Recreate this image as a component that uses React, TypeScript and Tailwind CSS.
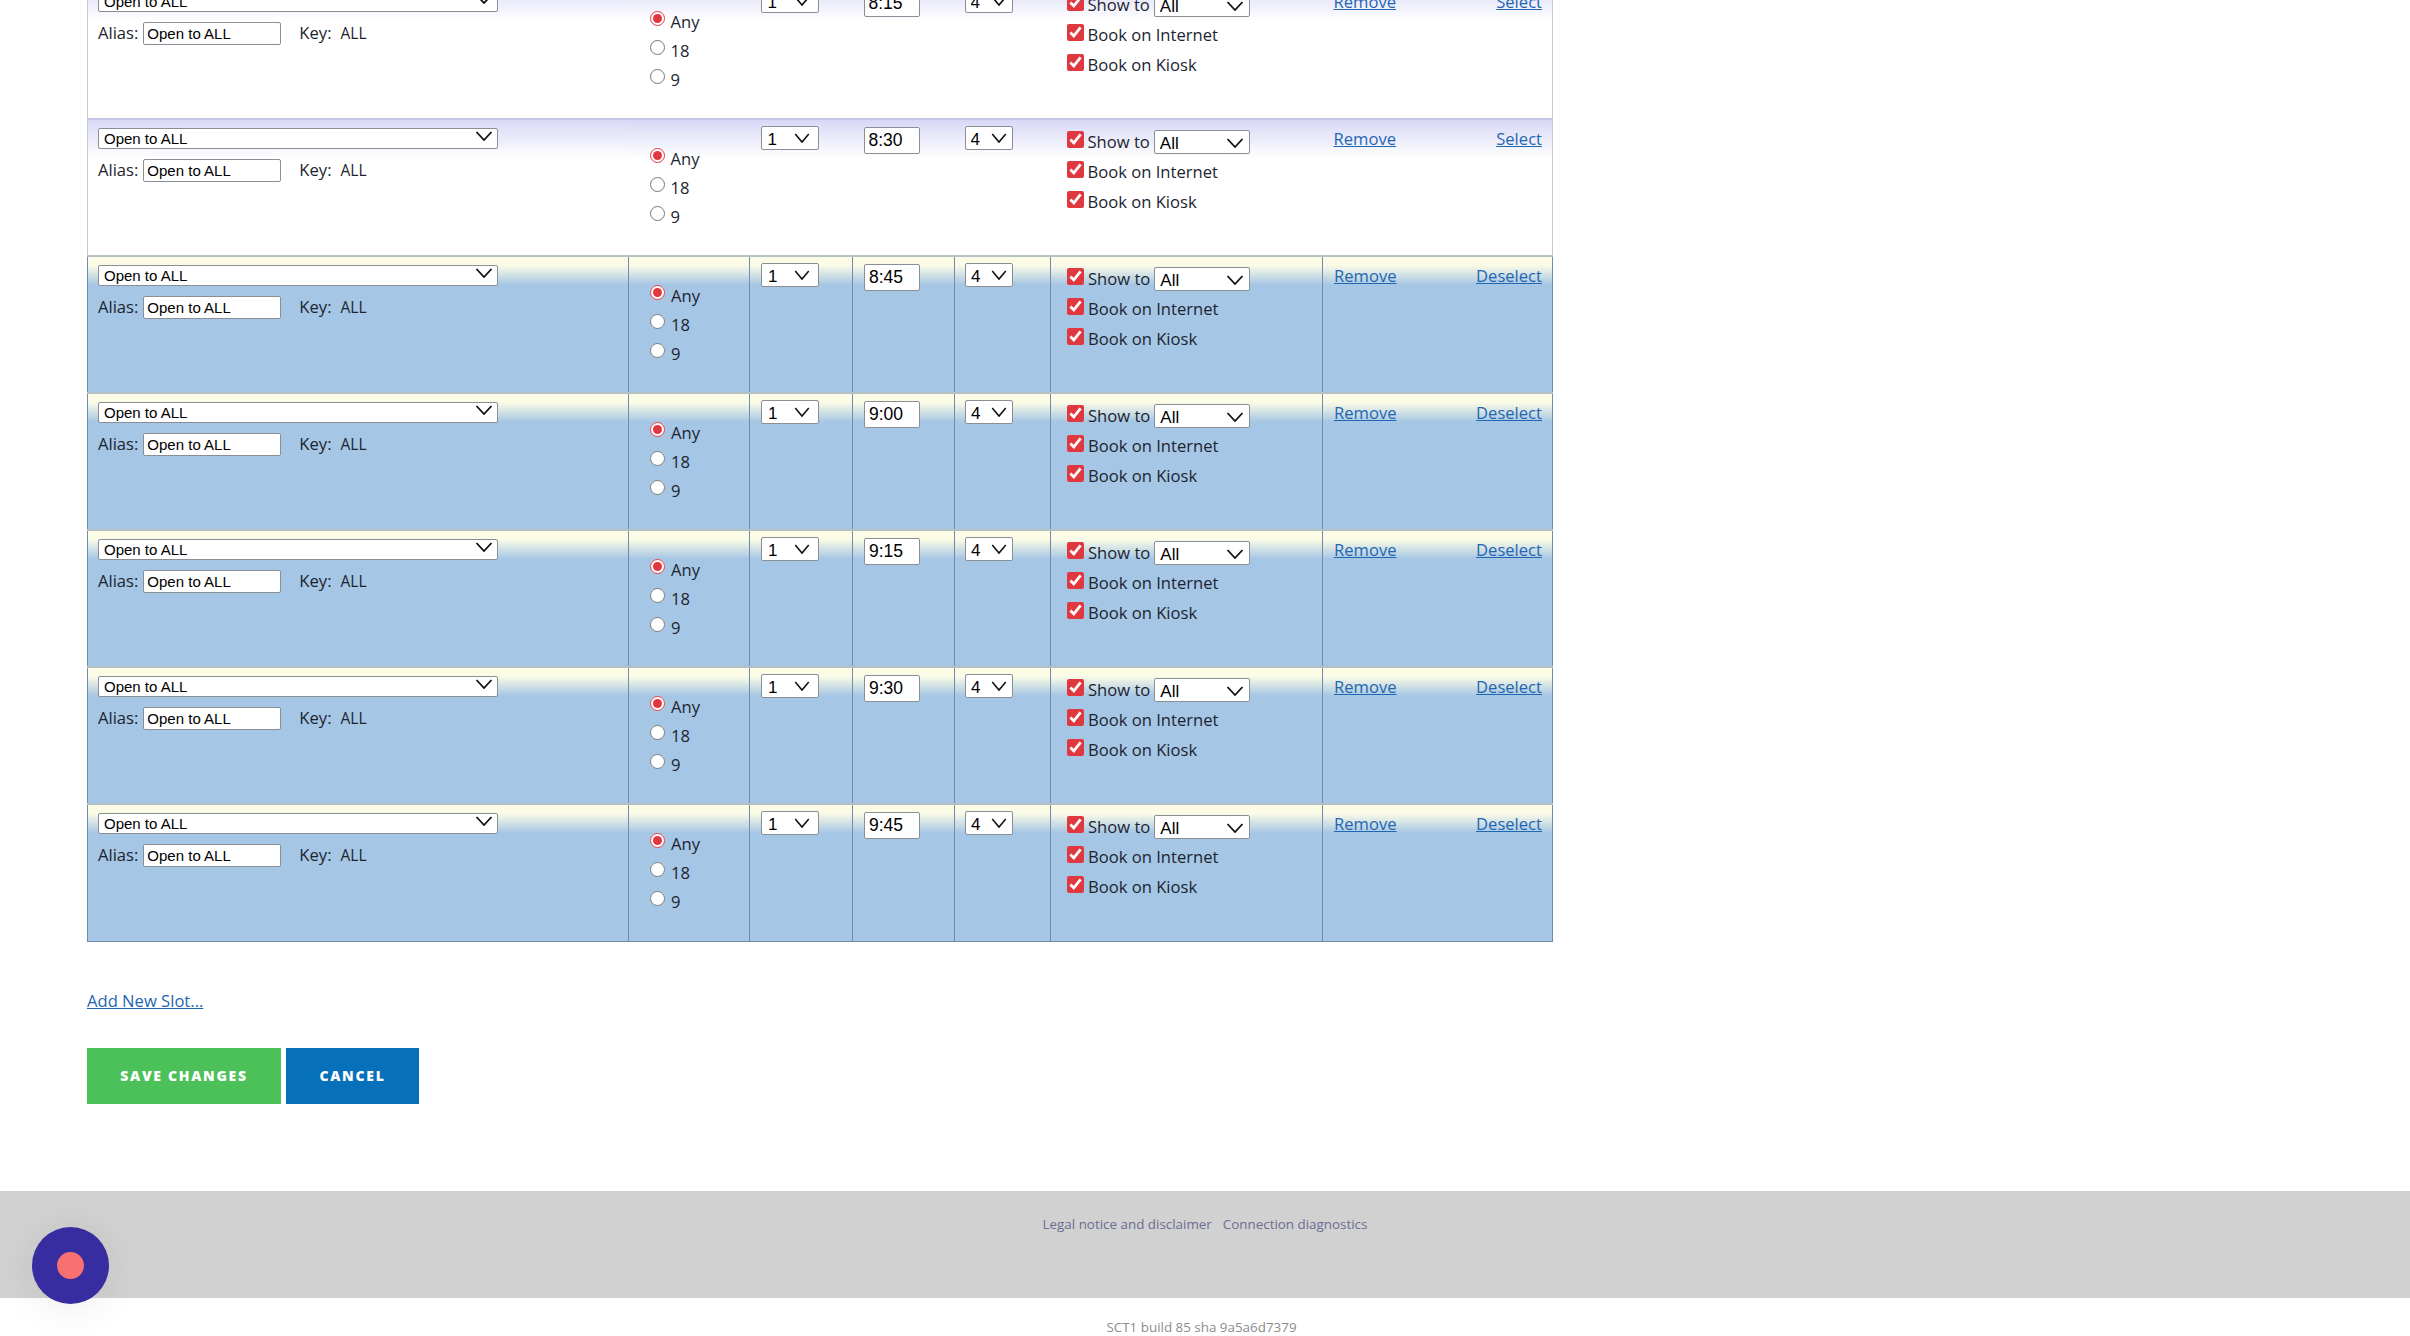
import React from 'react';

type Slot = { time: string; selected: boolean };

const SLOTS: Slot[] = [
    { time: '8:15', selected: false },
    { time: '8:30', selected: false },
    { time: '8:45', selected: true },
    { time: '9:00', selected: true },
    { time: '9:15', selected: true },
    { time: '9:30', selected: true },
    { time: '9:45', selected: true },
];

const Chevron: React.FC<{ className: string }> = ({ className }) => (
    <svg className={`absolute pointer-events-none ${className}`} width="18" height="10" viewBox="0 0 18 10" fill="none">
        <path d="M1.5 1 L9 9 L16.5 1" stroke="#111" strokeWidth="1.8" />
    </svg>
);

const Select: React.FC<{ label: string; className: string; textClass: string; chevronClass: string }> = ({ label, className, textClass, chevronClass }) => (
    <div className={`relative ${className}`}>
        <select defaultValue={label} className={`w-full h-full appearance-none bg-white border border-[#8a8f96] rounded-[2px] text-black font-['Liberation_Sans',sans-serif] ${textClass}`}>
            <option>{label}</option>
        </select>
        <Chevron className={chevronClass} />
    </div>
);

const Check: React.FC<{ label: string; children?: React.ReactNode; className?: string }> = ({ label, children, className = '' }) => (
    <div className={`flex items-center ${className}`}>
        <input type="checkbox" defaultChecked className="w-[17px] h-[17px] m-0 -mt-[6px] accent-[#e0383f] shrink-0" />
        <span className="ml-[4px] text-[16.6px] leading-[20px] text-[#1c2430]">{label}</span>
        {children}
    </div>
);

const Radio: React.FC<{ label: string; checked?: boolean; name: string }> = ({ label, checked, name }) => (
    <div className="flex items-center h-[29px]">
        <input type="radio" name={name} defaultChecked={checked} className="w-[15px] h-[15px] m-0 -mt-[6px] accent-[#e0383f]" />
        <span className="ml-[6px] text-[16.6px] leading-[20px] text-[#1c2430]">{label}</span>
    </div>
);

const SlotRow: React.FC<{ slot: Slot }> = ({ slot }) => {
    const cell = slot.selected
        ? 'align-top p-0 border-t-2 border-t-[#b4c0c4] border-r border-r-[#6f8cab] bg-[linear-gradient(#fcfce6_8px,#a5c6e4_28px)]'
        : 'align-top p-0 border-t-2 border-t-[#c4c4e8] bg-[linear-gradient(#d8d8f6,#ffffff_38px)]';
    const link = 'text-[16.6px] leading-[20px] text-[#1f66b3] underline';

    return (
        <tr className="h-[137px]">
            <td className={`${cell} border-l ${slot.selected ? 'border-l-[#6f8cab]' : 'border-l-[#c8cad2]'}`}>
                <div className="pl-[10px] pt-[6px]">
                    <Select label="Open to ALL" className="w-[400px] h-[21px]" textClass="pl-[5px] text-[15px] leading-[19px]" chevronClass="right-[5px] top-[5px]" />
                    <div className="flex items-center mt-[11px] text-[16.6px] text-[#1c2430]">
                        <span>Alias:</span>
                        <input defaultValue="Open to ALL" className="w-[138px] h-[23px] ml-[5px] pl-[3px] bg-white border border-[#8a8f96] rounded-[2px] text-[15px] text-black font-['Liberation_Sans',sans-serif]" />
                        <span className="ml-[18px]">Key:</span>
                        <span className="ml-[9px] text-[15.5px]">ALL</span>
                    </div>
                </div>
            </td>
            <td className={cell}>
                <div className="pl-[21px] pt-[24px]">
                    <Radio label="Any" checked name={`holes-${slot.time}`} />
                    <Radio label="18" name={`holes-${slot.time}`} />
                    <Radio label="9" name={`holes-${slot.time}`} />
                </div>
            </td>
            <td className={cell}>
                <div className="pl-[11px] pt-[6px]">
                    <Select label="1" className="w-[58px] h-[24px]" textClass="pl-[6px] text-[17px]" chevronClass="right-[8px] top-[7px] scale-x-[0.9]" />
                </div>
            </td>
            <td className={cell}>
                <div className="pl-[11px] pt-[7px]">
                    <input defaultValue={slot.time} className="w-[56px] h-[27px] pl-[4px] bg-white border border-[#8a8f96] rounded-[2px] text-[17.5px] text-black font-['Liberation_Sans',sans-serif]" />
                </div>
            </td>
            <td className={cell}>
                <div className="pl-[10px] pt-[6px]">
                    <Select label="4" className="w-[48px] h-[24px]" textClass="pl-[5px] text-[17px]" chevronClass="right-[5px] top-[7px] scale-x-[0.9]" />
                </div>
            </td>
            <td className={cell}>
                <div className="pl-[16px] pt-[10px]">
                    <Check label="Show to" className="h-[24px]">
                        <Select label="All" className="w-[96px] h-[24px] ml-[4px]" textClass="pl-[5px] text-[17px]" chevronClass="right-[6px] top-[8px]" />
                    </Check>
                    <Check label="Book on Internet" className="h-[24px] mt-[6px]" />
                    <Check label="Book on Kiosk" className="h-[24px] mt-[6px]" />
                </div>
            </td>
            <td className={`${cell} border-r ${slot.selected ? '' : 'border-r-[#c8cad2]'}`}>
                <div className="flex justify-between pl-[11px] pr-[10px] pt-[9px]">
                    <a href="#" className={link}>Remove</a>
                    <a href="#" className={link}>{slot.selected ? 'Deselect' : 'Select'}</a>
                </div>
            </td>
        </tr>
    );
};

export default function App() {
    return (
        <div className="relative h-[1336px] overflow-hidden bg-white font-['Open_Sans',sans-serif]">
            <div className="pl-[87px] -mt-[19px]">
                <table className="w-[1465px] table-fixed border-collapse border-b border-b-[#6f8cab]">
                    <colgroup>
                        <col className="w-[541px]" />
                        <col className="w-[121px]" />
                        <col className="w-[103px]" />
                        <col className="w-[102px]" />
                        <col className="w-[96px]" />
                        <col className="w-[272px]" />
                        <col className="w-[230px]" />
                    </colgroup>
                    <tbody>
                        {SLOTS.map(slot => <SlotRow key={slot.time} slot={slot} />)}
                    </tbody>
                </table>
                <a href="#" className="block mt-[47px] w-fit text-[16.6px] leading-[24px] text-[#1f66b3] underline">Add New Slot...</a>
                <div className="flex gap-[5px] mt-[35px]">
                    <button className="w-[194px] h-[56px] bg-[#4cc159] text-white text-[14px] font-extrabold tracking-[1.7px]">SAVE CHANGES</button>
                    <button className="w-[133px] h-[56px] bg-[#0670bb] text-white text-[14px] font-extrabold tracking-[1.7px]">CANCEL</button>
                </div>
            </div>

            <footer className="mt-[87px]">
                <div className="h-[107px] bg-[#d1d1d1] pt-[23px] flex justify-center gap-[11px] text-[13.4px] leading-[20px] text-[#6b6d92]">
                    <a href="#">Legal notice and disclaimer</a>
                    <a href="#">Connection diagnostics</a>
                </div>
                <p className="pt-[19px] pr-[7px] text-center text-[13.4px] leading-[20px] text-[#8c8c8c]">SCT1 build 85 sha 9a5a6d7379</p>
            </footer>

            {/* floating widget over the footer */}
            <div className="absolute left-[32px] top-[1227px] w-[77px] h-[77px] rounded-full bg-[#372da0] shadow-[0_4px_40px_rgba(0,0,0,0.08)] flex items-center justify-center">
                <div className="w-[27px] h-[27px] rounded-full bg-[#f97070]" />
            </div>
        </div>
    );
}
